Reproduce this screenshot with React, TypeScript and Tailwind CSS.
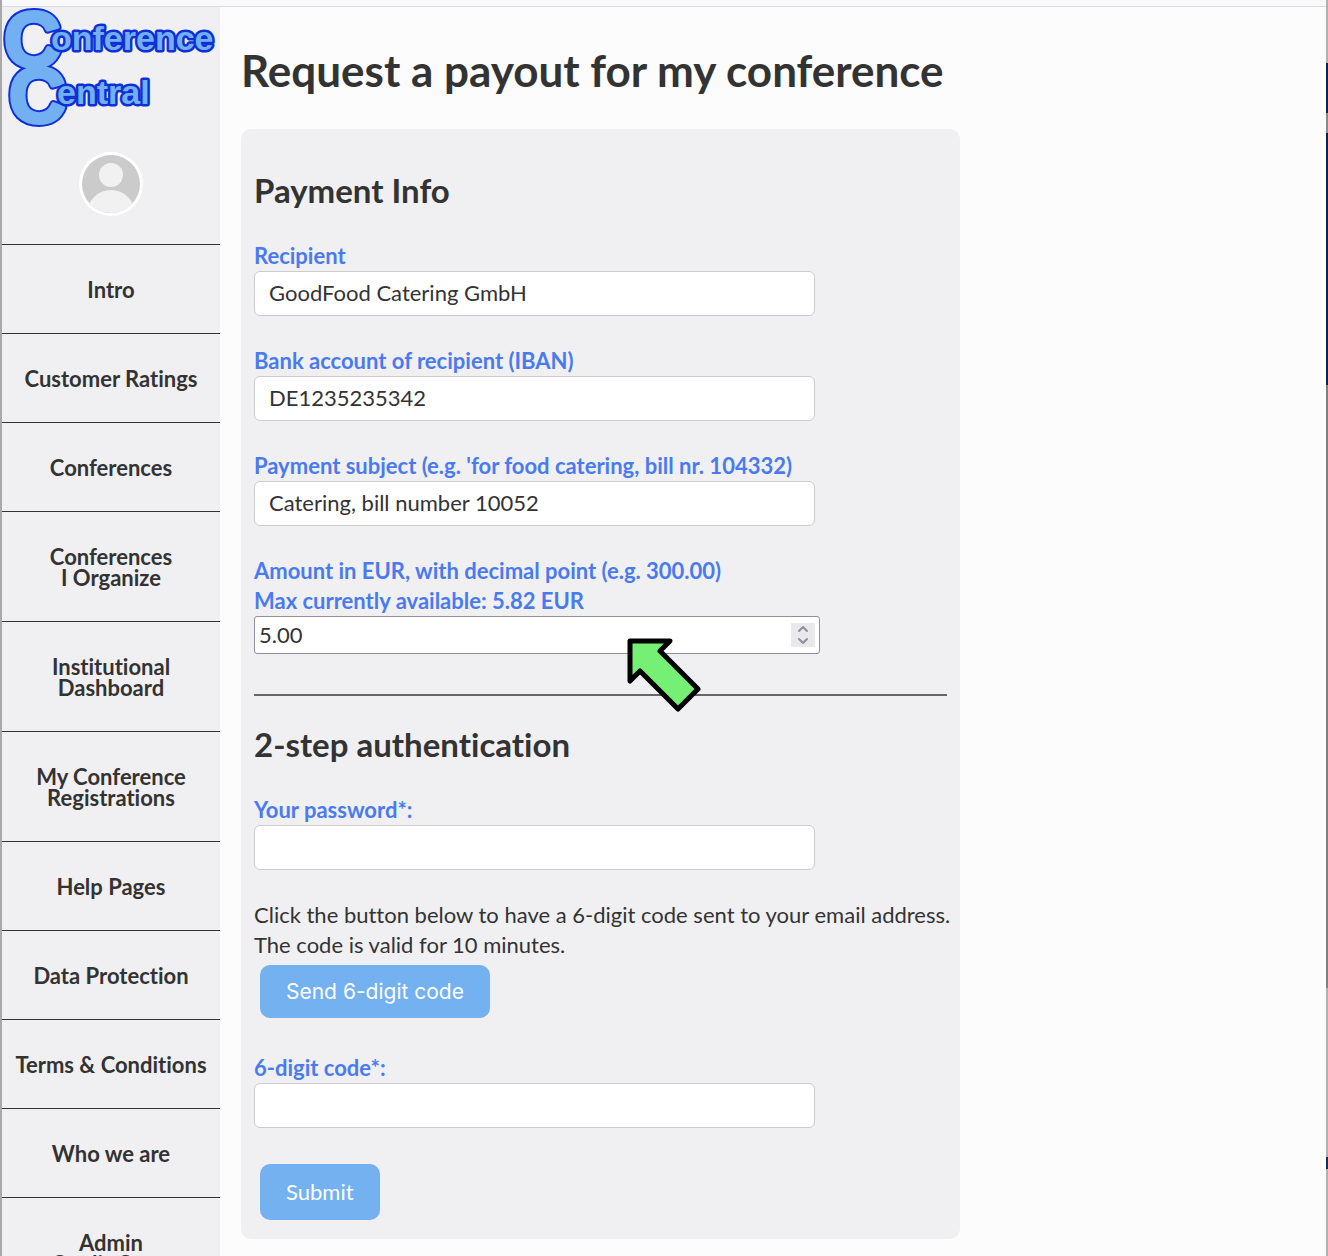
import { useState } from "react";
import { ChevronDown, ChevronUp } from "lucide-react";

const navItems = [
  ["Intro"],
  ["Customer Ratings"],
  ["Conferences"],
  ["Conferences", "I Organize"],
  ["Institutional", "Dashboard"],
  ["My Conference", "Registrations"],
  ["Help Pages"],
  ["Data Protection"],
  ["Terms & Conditions"],
  ["Who we are"],
  ["Admin", "Credit Costs"],
];

function Logo() {
  return (
    <svg
      className="block w-[218px] h-[123px]"
      viewBox="2 7 218 123"
      fontFamily="Liberation Sans, Arial, sans-serif"
      fontWeight="bold"
      fill="#72b0f2"
      strokeLinejoin="round"
      role="img"
      aria-label="Conference Central"
    >
      <defs>
        <g id="initials" fontSize="78">
          <text x="4" y="66">C</text>
          <text x="9" y="122">C</text>
        </g>
      </defs>
      <use href="#initials" stroke="#0f2fd8" strokeWidth="8" />
      <use href="#initials" stroke="#72b0f2" strokeWidth="4" />
      <g fontSize="34" stroke="#0f2fd8" strokeWidth="5" paintOrder="stroke">
        <text x="51" y="50">onference</text>
        <text x="57" y="104">entral</text>
      </g>
    </svg>
  );
}

function Avatar() {
  return (
    <svg className="w-16 h-16" viewBox="0 0 64 64" role="img" aria-label="Profile">
      <defs>
        <clipPath id="avatar">
          <circle cx="32" cy="32" r="29" />
        </clipPath>
      </defs>
      <circle cx="32" cy="32" r="32" fill="#fff" />
      <g clipPath="url(#avatar)">
        <rect width="64" height="64" fill="#cbcbcb" />
        <circle cx="32" cy="23" r="12" fill="#f1f1f1" />
        <circle cx="32" cy="62" r="24" fill="#f1f1f1" />
      </g>
    </svg>
  );
}

function Sidebar() {
  return (
    <aside className="w-[218px] shrink-0 bg-[#f0f0f3]">
      <a href="#" className="block">
        <Logo />
      </a>
      <a href="#" className="flex justify-center pt-[22px] pb-7">
        <Avatar />
      </a>
      <nav>
        {navItems.map((lines) => (
          <a
            key={lines.join(" ")}
            href="#"
            className="block border-t border-[#333] pt-[34px] pb-[33px] text-center text-[22px] leading-[21px] font-bold"
          >
            {lines.map((line) => (
              <span key={line} className="block">{line}</span>
            ))}
          </a>
        ))}
      </nav>
    </aside>
  );
}

type FieldProps = {
  id: string;
  label: string;
  type?: string;
  value?: string;
};

function Field({ id, label, type = "text", value = "" }: FieldProps) {
  const [text, setText] = useState(value);
  return (
    <div className="mb-[30px]">
      <label htmlFor={id} className="block font-bold text-[#4a7af0]">{label}</label>
      <input
        id={id}
        type={type}
        value={text}
        onChange={(e) => setText(e.target.value)}
        className="block w-full max-w-[561px] h-[45px] rounded-md border border-[#ccc] bg-white px-[14px] pb-0.5"
      />
    </div>
  );
}

function AmountField() {
  const [amount, setAmount] = useState("5.00");
  const step = (by: number) => setAmount((Number(amount) + by).toFixed(2));
  return (
    <div className="relative w-full max-w-[566px]">
      <label htmlFor="amount" className="block font-bold text-[#4a7af0]">
        Amount in EUR, with decimal point (e.g. 300.00)
        <br />
        Max currently available: 5.82 EUR
      </label>
      <div className="flex items-center h-[38px] rounded-[3px] border border-[#8f8f9d] bg-white pr-1">
        <input
          id="amount"
          type="number"
          step="0.01"
          value={amount}
          onChange={(e) => setAmount(e.target.value)}
          className="min-w-0 flex-1 px-1 outline-none [appearance:textfield]"
        />
        <div className="flex flex-col items-center justify-center w-6 h-6 bg-[#e9e9ed] text-[#8f8f9d]">
          <button type="button" aria-label="Increase" onClick={() => step(1)}>
            <ChevronUp className="w-4 h-3" viewBox="4 3 16 18" strokeWidth={3} />
          </button>
          <button type="button" aria-label="Decrease" onClick={() => step(-1)}>
            <ChevronDown className="w-4 h-3" viewBox="4 3 16 18" strokeWidth={3} />
          </button>
        </div>
      </div>
      <svg
        className="absolute left-[372px] top-20 w-[76px] h-[76px] pointer-events-none"
        viewBox="0 0 76 76"
        fill="#75f074"
        stroke="#000"
        strokeWidth="5"
        strokeLinejoin="round"
      >
        <path d="M4 5H44L34 15L72 53L52 73L14 35L4 45Z" />
      </svg>
    </div>
  );
}

function PayoutForm() {
  return (
    <form
      onSubmit={(e) => e.preventDefault()}
      className="w-full max-w-[719px] rounded-[10px] bg-[#f0f0f3] px-[13px] pt-10 pb-[19px] leading-[30px]"
    >
      <h2 className="mb-[30px] text-[33px] leading-[42px] font-bold">Payment Info</h2>
      <Field id="recipient" label="Recipient" value="GoodFood Catering GmbH" />
      <Field id="iban" label="Bank account of recipient (IBAN)" value="DE1235235342" />
      <Field
        id="subject"
        label="Payment subject (e.g. 'for food catering, bill nr. 104332)"
        value="Catering, bill number 10052"
      />
      <AmountField />
      <hr className="mt-10 mb-[27px] border-t-2 border-[#666]" />
      <h2 className="mb-[30px] text-[33px] leading-[42px] font-bold">2-step authentication</h2>
      <Field id="password" label="Your password*:" type="password" />
      <p className="-mr-3">Click the button below to have a 6-digit code sent to your email address.</p>
      <p>The code is valid for 10 minutes.</p>
      <button type="button" className="block mt-[5px] mb-[35px] ml-1.5 h-[53px] rounded-[10px] bg-[#73b1f1] px-[26px] font-[Inter,sans-serif] text-[21px] text-white">
        Send 6-digit code
      </button>
      <Field id="code" label="6-digit code*:" />
      <button type="submit" className="block mt-9 ml-1.5 h-14 rounded-[10px] bg-[#73b1f1] px-[26px] text-white">
        Submit
      </button>
    </form>
  );
}

// slivers of the desktop that show beside the window
function WindowEdge() {
  return (
    <div className="flex flex-col w-0.5 shrink-0 bg-[#b0b0b0]">
      <div className="h-[63px]" />
      <div className="h-[50px] bg-[#0b2149]" />
      <div className="h-5 bg-[#8a8a8a]" />
      <div className="h-[252px] bg-[#0b2149]" />
      <div className="h-[603px] bg-[#7f7f7f]" />
      <div className="h-[169px]" />
      <div className="h-3 bg-[#1f2760]" />
    </div>
  );
}

export default function App() {
  return (
    <div className="flex h-screen overflow-hidden bg-[#fcfcfc] font-[Lato,sans-serif] text-[22px] text-[#333] [font-variant-ligatures:none]">
      <div className="w-0.5 shrink-0 bg-[#a9a9ab]" />
      <div className="flex flex-1 flex-col min-w-0">
        <div className="h-[7px] shrink-0 border-b border-[#dcdcdc] bg-[#f9f9fb]" />
        <div className="flex">
          <Sidebar />
          <main className="flex-1 min-w-0 pl-[21px] pr-5 pt-[34px]">
            <h1 className="mb-[30px] text-[44px] leading-[58px] font-bold">Request a payout for my conference</h1>
            <PayoutForm />
          </main>
        </div>
      </div>
      <WindowEdge />
    </div>
  );
}
